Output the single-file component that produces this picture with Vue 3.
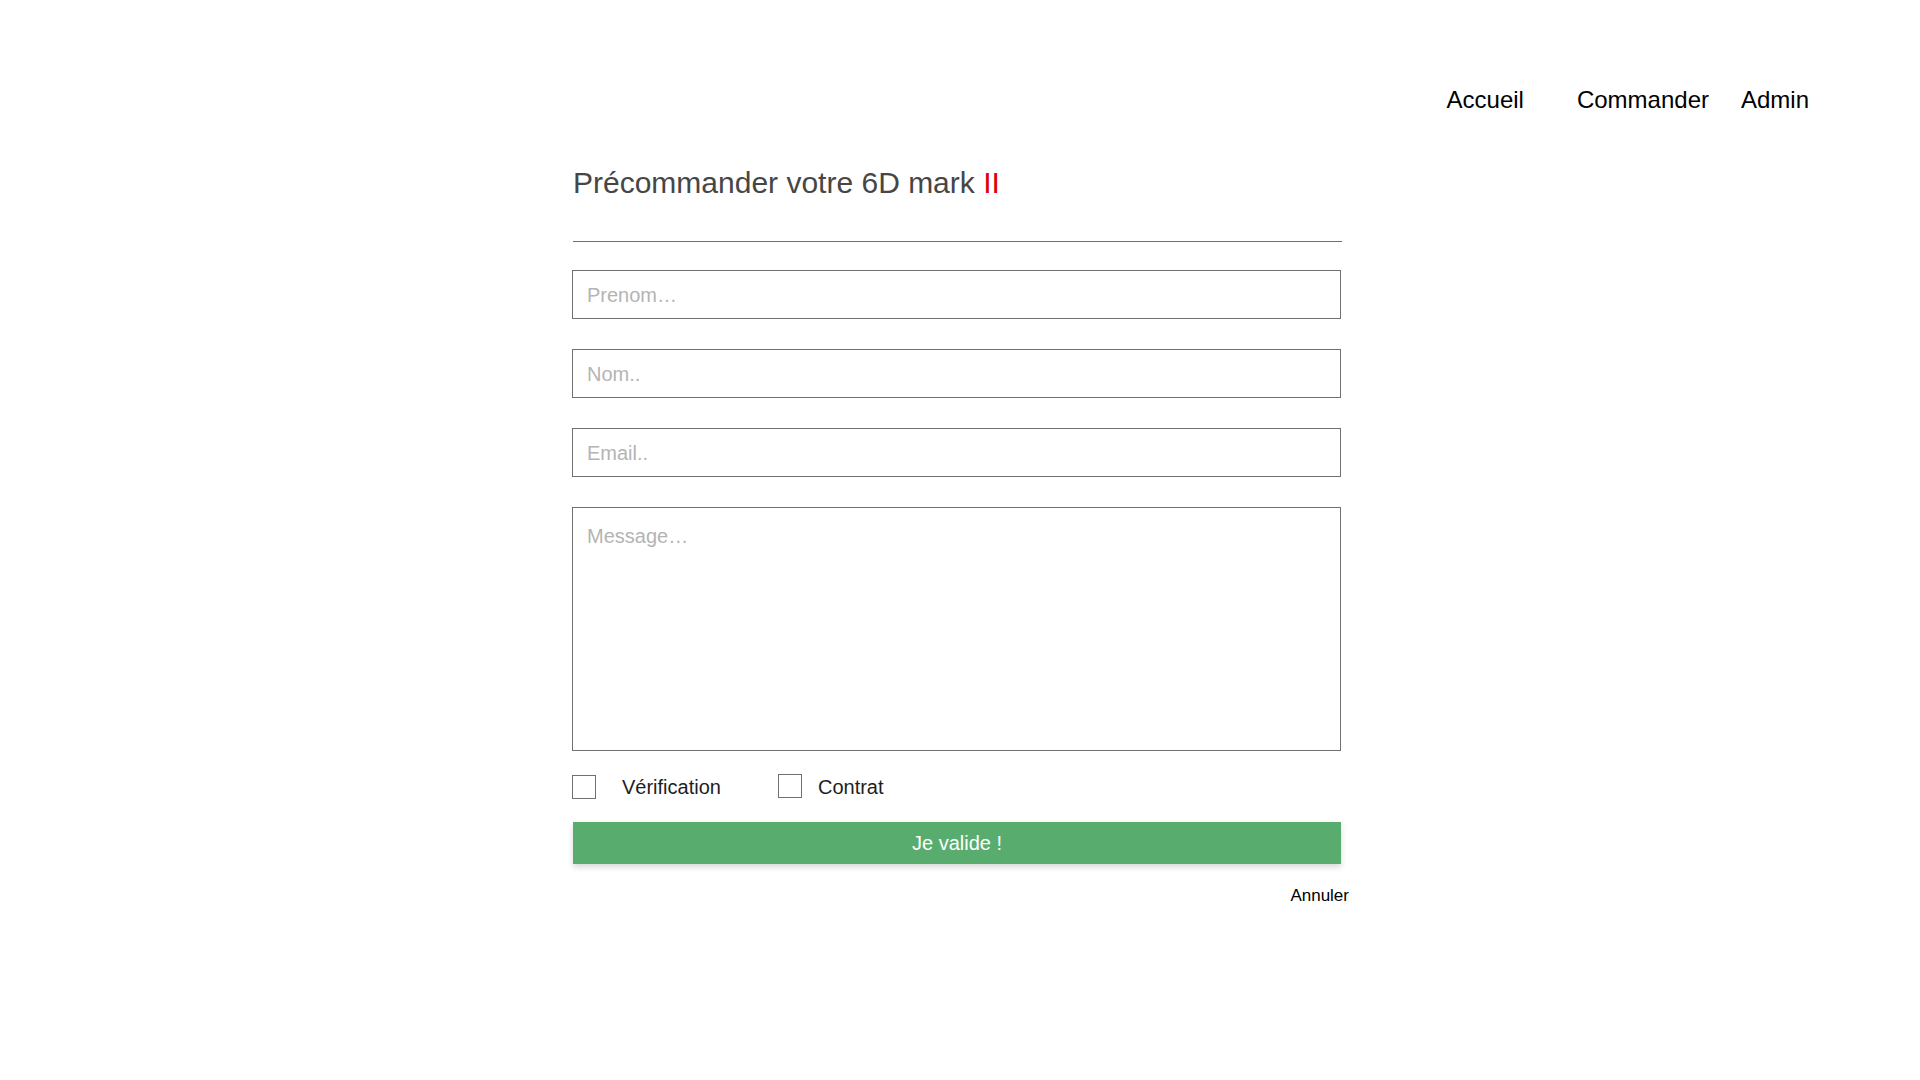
<script setup>
import { reactive } from 'vue'

const order = reactive({
  firstName: '',
  lastName: '',
  email: '',
  message: '',
  verified: false,
  contract: false
})

const fields = [
  { key: 'firstName', type: 'text', label: 'Prenom…' },
  { key: 'lastName', type: 'text', label: 'Nom..' },
  { key: 'email', type: 'email', label: 'Email..' }
]
</script>

<template>
  <div class="page">
    <header>
      <nav class="menu">
        <a class="home" href="#">Accueil</a>
        <a href="#">Commander</a>
        <a href="#">Admin</a>
      </nav>
    </header>
    <main>
      <form class="order" @submit.prevent>
        <h1>Précommander votre 6D mark <span class="accent">II</span></h1>
        <hr />
        <input
          v-for="field in fields"
          :key="field.key"
          v-model="order[field.key]"
          class="field"
          :type="field.type"
          :placeholder="field.label"
          :aria-label="field.label"
        />
        <textarea v-model="order.message" class="field message" placeholder="Message…" aria-label="Message…"></textarea>
        <div class="checks">
          <label class="check verification"><input v-model="order.verified" type="checkbox" />Vérification</label>
          <label class="check contract"><input v-model="order.contract" type="checkbox" />Contrat</label>
        </div>
        <button class="submit" type="submit">Je valide !</button>
      </form>
      <a class="cancel" href="#">Annuler</a>
    </main>
  </div>
</template>

<style>
body {
  background: #fff;
}
</style>

<style scoped>
.page,
.page input,
.page textarea,
.page button {
  font-family: "Liberation Sans", Arial, sans-serif;
}

.page * {
  box-sizing: border-box;
}

a {
  color: #000;
  text-decoration: none;
}

.menu {
  display: flex;
  justify-content: flex-end;
  gap: 32px;
  padding: 86px 111px 0 0;
  font-size: 24px;
  line-height: 28px;
}

.home {
  margin-right: 21px;
}

main {
  display: flex;
  flex-direction: column;
  width: calc(40vw + 10px);
  margin: 0 auto;
  padding: 52px 0 0 1px;
}

.order {
  display: flex;
  flex-direction: column;
  margin-right: 8px;
}

h1 {
  margin: 0;
  padding-left: 1px;
  color: #464646;
  font-size: 30px;
  font-weight: 400;
  line-height: 34px;
}

.accent {
  color: #e00000;
}

hr {
  width: 100%;
  margin: 41px 0 28px 1px;
  border: 0;
  border-top: 1px solid #707070;
}

.field {
  width: 100%;
  height: 49px;
  margin: 0 0 30px;
  padding: 2px 14px 0;
  border: 1px solid #707070;
  border-radius: 0;
  background: #fff;
  color: #222;
  font-size: 20px;
  line-height: 24px;
}

.field::placeholder {
  color: #b4b4b4;
  opacity: 1;
}

.message {
  height: 244px;
  margin-bottom: 23px;
  padding-top: 16px;
  resize: none;
}

.checks {
  display: flex;
  align-items: flex-start;
  gap: 57px;
  margin-bottom: 22px;
}

.check {
  display: flex;
  align-items: center;
  color: #1e1e1e;
  font-size: 20px;
  line-height: 26px;
}

.check input {
  appearance: none;
  width: 24px;
  height: 24px;
  margin: 0;
  border: 1px solid #707070;
  background: #fff;
}

.check input:checked {
  background: #58ad6e;
}

.verification {
  gap: 26px;
}

.contract {
  gap: 16px;
}

.contract input {
  align-self: flex-start;
}

.submit {
  height: 42px;
  margin-left: 1px;
  padding: 0;
  border: 0;
  background: #58ad6e;
  box-shadow: 0 3px 6px rgba(0, 0, 0, 0.16);
  color: #fff;
  font-size: 20px;
  line-height: 24px;
}

.cancel {
  align-self: flex-end;
  margin-top: 22px;
  font-size: 17px;
  line-height: 20px;
}
</style>
